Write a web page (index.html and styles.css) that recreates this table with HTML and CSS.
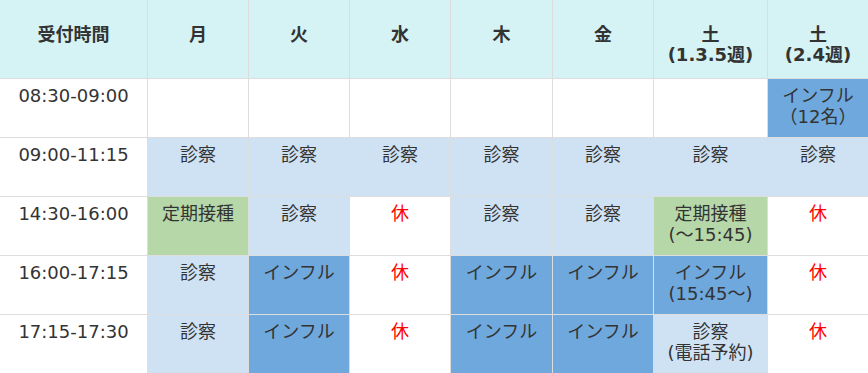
FILE: index.html
```html
<!DOCTYPE html>
<html lang="ja">
<head>
<meta charset="utf-8">
<title>受付時間</title>
<link rel="stylesheet" href="styles.css">
</head>
<body>
<table class="schedule">
  <colgroup>
    <col class="c-time">
    <col class="c-day">
    <col class="c-day">
    <col class="c-day">
    <col class="c-wide">
    <col class="c-day">
    <col class="c-sat">
    <col class="c-day">
  </colgroup>
  <thead>
    <tr>
      <th>受付時間</th>
      <th>月</th>
      <th>火</th>
      <th>水</th>
      <th>木</th>
      <th>金</th>
      <th>土<br>(1.3.5週)</th>
      <th>土<br>(2.4週)</th>
    </tr>
  </thead>
  <tbody>
    <tr>
      <td>08:30-09:00</td>
      <td></td>
      <td></td>
      <td></td>
      <td></td>
      <td></td>
      <td></td>
      <td class="flu">インフル<br>（12名）</td>
    </tr>
    <tr>
      <td>09:00-11:15</td>
      <td class="exam">診察</td>
      <td class="exam">診察</td>
      <td class="exam">診察</td>
      <td class="exam">診察</td>
      <td class="exam">診察</td>
      <td class="exam">診察</td>
      <td class="exam">診察</td>
    </tr>
    <tr>
      <td>14:30-16:00</td>
      <td class="vacc">定期接種</td>
      <td class="exam">診察</td>
      <td class="off">休</td>
      <td class="exam">診察</td>
      <td class="exam">診察</td>
      <td class="vacc">定期接種<br>(～15:45)</td>
      <td class="off">休</td>
    </tr>
    <tr>
      <td>16:00-17:15</td>
      <td class="exam">診察</td>
      <td class="flu">インフル</td>
      <td class="off">休</td>
      <td class="flu">インフル</td>
      <td class="flu">インフル</td>
      <td class="flu">インフル<br>(15:45～)</td>
      <td class="off">休</td>
    </tr>
    <tr>
      <td>17:15-17:30</td>
      <td class="exam">診察</td>
      <td class="flu">インフル</td>
      <td class="off">休</td>
      <td class="flu">インフル</td>
      <td class="flu">インフル</td>
      <td class="exam">診察<br>(電話予約)</td>
      <td class="off">休</td>
    </tr>
  </tbody>
</table>
</body>
</html>
```

FILE: styles.css
```css
html, body {
  margin: 0;
  padding: 0;
  background: #ffffff;
}

.schedule {
  width: 868px;
  table-layout: fixed;
  border-collapse: separate;
  border-spacing: 0;
  font-family: "DejaVu Sans", "Noto Sans CJK JP", sans-serif;
  color: #333333;
  font-size: 18px;
}

.c-time { width: 147px; }
.c-day { width: 101px; }
.c-wide { width: 102px; }
.c-sat { width: 114px; }

.schedule th,
.schedule td {
  box-sizing: border-box;
  padding: 0;
  text-align: center;
  vertical-align: top;
  border-left: 1px solid #dddddd;
}

.schedule th:first-child,
.schedule td:first-child {
  border-left: none;
}

.schedule th {
  height: 78px;
  padding-top: 25px;
  background: #d5f3f5;
  font-weight: bold;
  line-height: 20px;
}

.schedule td {
  height: 59px;
  padding-top: 6px;
  border-top: 1px solid #dddddd;
  line-height: 21px;
  font-weight: normal;
}

.schedule .exam { background: #cfe2f3; }
.schedule .flu { background: #6fa8dc; }
.schedule .vacc { background: #b6d7a8; }
.schedule .off { color: #ff0000; }
```
